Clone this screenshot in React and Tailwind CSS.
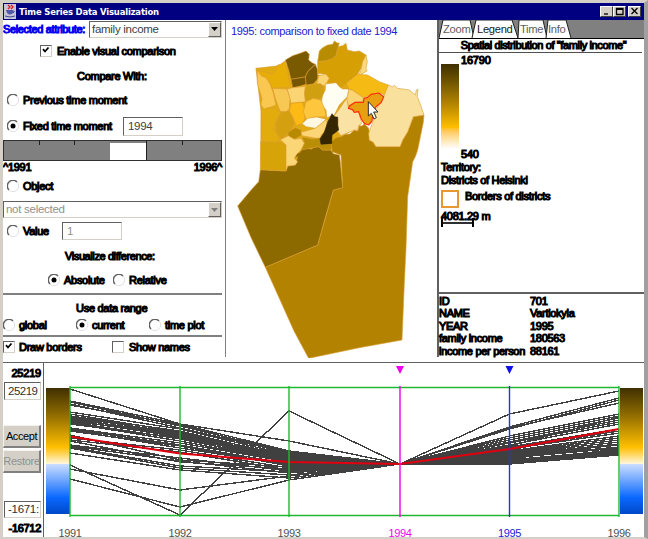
import React from 'react';
import clsx from 'clsx';

// District polygons, drawn back to front
const DISTRICTS = [
    { fill: '#e0aa10', d: '90,160 178,150 362,205 405,250 400,335 345,365 318,400 205,440 105,440 105,290' },
    { fill: '#b38300', d: '316,380 330,368 345,365 358,358 372,357 385,345 395,348 400,332 408,333 415,326 428,340 430,352 430,375 442,382 450,395 522,395 530,375 545,350 562,305 594,300 592,322 575,405 568,425 560,440 545,545 540,700 535,805 528,975 400,998 248,1030 205,950 118,757 275,690 322,525 350,518 345,420 318,410' },
    { fill: '#8c6a00', d: '103,464 180,468 185,453 208,450 215,425 205,430 212,415 222,412 230,400 240,398 255,403 265,396 278,395 290,405 315,405 322,416 340,420 343,440 350,518 322,525 300,600 275,690 118,757 76,670 35,573 78,522 98,500' },
    { fill: '#e8ae08', d: '90,160 100,168 115,171 138,178 150,165 155,150 163,148 178,137 183,160 188,190 195,215 140,220 132,207 120,188 105,182 94,178' },
    { fill: '#7a5a00', d: '178,135 200,122 222,115 240,108 250,118 248,135 258,143 268,148 245,170 238,186 195,193 188,165' },
    { fill: '#7a5a00', d: '268,148 275,165 275,192 262,207 240,210 238,186 245,170' },
    { fill: '#755600', d: '195,193 238,186 240,208 220,214 200,218' },
    { fill: '#d6a004', d: '275,140 300,137 330,122 335,95 350,92 360,85 364,105 385,110 400,108 420,120 410,140 405,160 395,178 380,190 362,205 345,218 338,212 330,205 304,203 310,190 300,178 275,175' },
    { fill: '#b88c00', d: '275,140 280,108 290,98 305,90 320,88 325,78 334,84 340,84 335,98 330,122 315,132 300,137' },
    { fill: '#fcd97c', d: '420,120 424,140 420,160 423,168 398,182 405,165 410,140' },
    { fill: '#f5bb14', d: '362,205 380,190 395,178 425,180 460,200 487,210 480,243 462,234 435,240 412,248 400,240 380,226 368,222' },
    { fill: '#f9e09c', d: '487,210 500,215 505,211 515,220 530,222 550,225 568,240 571,225 576,222 574,245 582,265 594,300 562,305 545,350 530,375 522,395 450,395 442,382 430,375 428,355 440,322 450,285 473,245' },
    { fill: '#fbd474', d: '368,222 380,226 400,240 412,248 410,260 385,262 367,272 362,255' },
    { fill: '#fffef2', d: '290,240 298,225 298,207 330,203 340,215 350,222 368,222 364,245 340,270 325,300 302,308 300,285 285,268' },
    { fill: '#fae1a4', d: '325,302 345,275 362,250 367,275 380,288 398,292 408,325 398,332 395,346 385,345 345,362 335,350 336,312' },
    { fill: '#fbd474', d: '272,207 278,182 298,177 310,190 302,203 295,212' },
    { fill: '#d0a010', d: '238,214 262,207 284,206 292,214 293,232 285,252 262,250 240,260 235,235' },
    { fill: '#fbd474', d: '183,222 200,218 238,214 235,235 238,260 195,265 190,245' },
    { fill: '#f8c854', d: '140,220 183,222 192,250 190,280 180,292 162,288 148,250' },
    { fill: '#fac850', d: '94,165 105,182 120,188 132,207 142,235 150,270 125,280 115,285 105,268 108,250 100,225 94,205' },
    { fill: '#e2ac0c', d: '106,285 125,278 150,280 165,292 150,315 143,342 160,368 155,382 105,382' },
    { fill: '#d4a010', d: '165,292 190,288 198,305 205,325 195,345 180,362 165,372 150,350 150,325' },
    { fill: '#fdb914', d: '195,265 228,262 240,290 232,325 210,332 200,305 190,288' },
    { fill: '#fdc63c', d: '240,260 262,250 285,255 297,285 300,305 270,306 240,312 232,290' },
    { fill: '#fff8e2', d: '228,326 245,310 272,306 300,312 292,322 268,340 240,335' },
    { fill: '#b88a00', d: '187,352 208,338 225,345 228,360 205,373 185,366' },
    { fill: '#fcd676', d: '225,352 268,340 303,312 302,340 285,362 283,372 228,362' },
    { fill: '#b98e06', d: '228,366 260,372 285,368 285,388 317,388 316,405 290,405 278,395 225,405 235,385' },
    { fill: '#332600', stroke: '#332600', d: '318,296 326,306 335,306 335,330 338,345 318,360 317,386 285,388 282,372 295,352 305,322' },
    { fill: '#d6a408', d: '104,380 165,382 180,390 180,468 103,464' },
    { fill: '#fbd676', d: '163,374 187,362 205,373 225,370 235,385 225,405 212,418 205,430 215,440 208,450 185,453 180,468 180,390' },
    { fill: '#e8a010', stroke: '#ff3010', width: 3.6, d: '367,280 372,272 388,262 412,262 414,250 425,247 435,238 458,234 473,245 466,262 450,275 440,300 438,318 428,330 415,325 406,312 398,290 385,292 380,284' },
];

const YEARS = [
    { x: 26, label: '1991', color: '#20b830', text: '#505050' },
    { x: 136, label: '1992', color: '#20b830', text: '#505050' },
    { x: 245, label: '1993', color: '#20b830', text: '#505050' },
    { x: 356, label: '1994', color: '#f000f0', text: '#f000f0' },
    { x: 465.5, label: '1995', color: '#3030d8', text: '#2020e0' },
    { x: 575, label: '1996', color: '#20b830', text: '#505050' },
];

// One row per district: vertical position at each year
const SERIES = [
    [26, 61, 78, 101, 51, 28],
    [102, 152, 48, 101, 64, 35],
    [106, 127, 113, 101, 66, 37],
    [116, 144, 117, 101, 65, 40],
    [38, 61, 88, 101, 73, 51],
    [39, 63, 89, 101, 75, 53],
    [41, 65, 90, 101, 77, 55],
    [42, 62, 91, 101, 79, 57],
    [49, 66, 92, 101, 80, 59],
    [51, 69, 93, 101, 82, 61],
    [53, 68, 94, 101, 83, 54],
    [54, 70, 95, 101, 84, 66],
    [55, 73, 96, 101, 85, 68],
    [56, 71, 94, 101, 86, 70],
    [57, 74, 97, 101, 87, 66],
    [58, 72, 96, 101, 88, 73],
    [59, 76, 98, 101, 89, 75],
    [60, 78, 99, 101, 90, 77],
    [61, 75, 100, 101, 91, 79],
    [65, 80, 99, 101, 92, 81],
    [66, 82, 101, 101, 93, 82],
    [67, 85, 102, 101, 94, 84],
    [68, 83, 103, 101, 95, 85],
    [72, 97, 104, 101, 96, 81],
    [75, 87, 105, 101, 97, 87],
    [77, 89, 107, 101, 98, 88],
    [78, 99, 106, 101, 99, 86],
    [82, 95, 108, 101, 99, 89],
    [83, 98, 110, 101, 100, 90],
    [84, 103, 109, 101, 100, 91],
    [85, 105, 112, 101, 101, 91],
    [90, 107, 115, 101, 101, 92],
];
const AVERAGE = [73.5, 90.5, 99, 101, 86, 66];

const points = row => row.map((y, i) => `${YEARS[i].x},${y}`).join(' ');

const Label = ({ children, className }) => (
    <span className={clsx('whitespace-pre [-webkit-text-stroke:1.1px_currentColor]', className)}>{children}</span>
);

const Radio = ({ checked }) => (
    <svg className="h-[12px] w-[12px] shrink-0" viewBox="0 0 12 12" fill="none">
        <path d="M2 10A5.2 5.2 0 0 1 10 2" stroke="#606060" strokeWidth="1.4" />
        <path d="M2 10A5.2 5.2 0 0 0 10 2" stroke="#e0e0e0" />
        {checked && <circle cx="6" cy="6" r="2.5" fill="#000" />}
    </svg>
);

const Check = ({ checked }) => (
    <span className="h-[12px] w-[12px] shrink-0 border border-[#d4d0c8] border-t-[#606060] border-l-[#606060]">
        {checked && (
            <svg className="h-[10px] w-[10px]" viewBox="0 0 10 10" fill="none" stroke="#000" strokeWidth="1.8">
                <path d="M2 3.2L4 5.5L7.5 1.5" />
            </svg>
        )}
    </span>
);

const Arrow = ({ disabled }) => (
    <span className="flex h-full w-[13px] items-center justify-center border border-white border-r-[#606060] border-b-[#606060] bg-[#d4d0c8]">
        <svg className="h-[4px] w-[7px]" viewBox="0 0 7 4">
            <path d="M0 0H7L3.5 4Z" fill={disabled ? '#808080' : '#000'} />
        </svg>
    </span>
);

const Field = ({ children, className }) => (
    <span className={clsx('flex items-center overflow-hidden border border-[#d4d0c8] border-t-[#606060] border-l-[#606060] bg-white text-[11.5px]', className)}>{children}</span>
);

const TitleBar = () => (
    <div className="flex h-[17px] shrink-0 items-center bg-[#000080] pr-[3px] pl-[1px]">
        <svg className="h-[15px] w-[12px]" viewBox="0 0 12 15" fill="none">
            <rect width="12" height="15" fill="#c8c4d8" />
            <path d="M4 1L6 3L4 5M7 1L9 3L7 5" stroke="#e02020" strokeWidth="1.3" />
            <path d="M2 6H9V9Q6 12 3 9Z" fill="#5058a8" />
            <path d="M9 7Q12 7 9 9M1 12Q6 14 11 12" stroke="#404890" />
        </svg>
        <span className="ml-[3px] text-[9.4px] font-bold tracking-[-0.17px] whitespace-pre text-white font-['DejaVu_Sans_Condensed','DejaVu_Sans',sans-serif]">Time Series Data Visualization</span>
        <div className="ml-auto flex">
            {['M2 7H6', 'M1.5 1.5H8V7.5H1.5ZM1.5 2.3H8', 'M1.5 1L7.5 7M7.5 1L1.5 7'].map((d, i) => (
                <span key={d} className={clsx('flex h-[11px] w-[13px] items-center justify-center border border-white border-r-[#404040] border-b-[#404040] bg-[#d4d0c8]', i === 2 && 'ml-[2px]')}>
                    <svg className="h-[9px] w-[9px]" viewBox="0 0 9 9" fill="none" stroke="#000" strokeWidth="1.3"><path d={d} /></svg>
                </span>
            ))}
        </div>
    </div>
);

const ControlPanel = () => (
    <div className="flex w-[223px] shrink-0 flex-col border-r border-[#808080] pr-[3px] tracking-[-0.28px]">
        <div className="flex h-[18px] items-center">
            <Label className="w-[86px] tracking-[-0.35px] text-[#0000f0]">Selected attribute:</Label>
            <Field className="h-[17px] flex-1 justify-between pl-[2px] text-[#404040]">family income<Arrow /></Field>
        </div>
        <div className="flex h-[26px] items-center pl-[37px]"><Check checked /><Label className="ml-[5px]">Enable visual comparison</Label></div>
        <div className="flex h-[24px] items-center pl-[74px]"><Label>Compare With:</Label></div>
        <div className="flex h-[24px] items-center pl-[4px]"><Radio /><Label className="ml-[4px]">Previous time moment</Label></div>
        <div className="flex h-[28px] items-center pl-[4px]">
            <Radio checked /><Label className="ml-[4px] w-[100px]">Fixed time moment</Label>
            <Field className="h-[19px] w-[60px] pl-[4px] text-[#404040]">1994</Field>
        </div>
        <div className="grid h-[21px] grid-cols-[34.6px_35.8px_35.8px_36px_36px_1fr] border border-[#303030] bg-[#808080]">
            {[0, 1, 2, 3, 4, 5].map(i => (
                <div key={i} className={clsx(i === 3 && 'mt-[2px] bg-white')}>
                    {i > 0 && i !== 3 && <div className={clsx('w-px bg-[#202020]', i === 4 ? 'h-full' : 'h-[4px]')} />}
                </div>
            ))}
        </div>
        <div className="flex h-[13px] items-center justify-between"><Label>^1991</Label><Label>1996^</Label></div>
        <div className="flex h-[26px] items-center pb-[2px] pl-[4px]"><Radio /><Label className="ml-[4px]">Object</Label></div>
        <div className="mt-[1px] flex h-[17px]">
            <Field className="flex-1 justify-between pl-[2px] text-[#909090]">not selected<Arrow disabled /></Field>
        </div>
        <div className="flex h-[26px] items-center pl-[4px]">
            <Radio /><Label className="ml-[4px] w-[39px]">Value</Label>
            <Field className="h-[18px] w-[60px] pl-[4px] text-[#909090]">1</Field>
        </div>
        <div className="flex h-[24px] items-center pl-[62px]"><Label className="tracking-[-0.4px]">Visualize difference:</Label></div>
        <div className="flex h-[24px] items-center pl-[45px]">
            <Radio checked /><Label className="ml-[4px] w-[49px]">Absolute</Label>
            <Radio /><Label className="ml-[4px]">Relative</Label>
        </div>
        <div className="mt-[1px] flex h-[44px] flex-col border-y-2 border-[#808080]">
            <Label className="mt-[6px] pl-[73px] leading-[14px]">Use data range</Label>
            <div className="mt-[2px] flex h-[16px] items-center">
                <Radio /><Label className="ml-[4px] w-[57px]">global</Label>
                <Radio checked /><Label className="ml-[4px] w-[57px]">current</Label>
                <Radio /><Label className="ml-[4px]">time plot</Label>
            </div>
        </div>
        <div className="flex h-[20px] items-center">
            <Check checked /><Label className="ml-[4px] w-[93px]">Draw borders</Label>
            <Check /><Label className="ml-[5px]">Show names</Label>
        </div>
    </div>
);

const MapPanel = () => (
    <div className="relative w-[211px] shrink-0">
        <svg className="h-[338px] w-[210px]" viewBox="0 15 630 1014">
            {DISTRICTS.map(({ fill, stroke = '#dc9c30', width = 1.8, d }) => (
                <polygon key={d} points={d} fill={fill} stroke={stroke} strokeWidth={width} strokeLinejoin="round" />
            ))}
            <path d="M427 260V303L436 295L444 312L451 308L443 291H456Z" fill="#fff" stroke="#303030" strokeWidth="3" />
        </svg>
        <span className="absolute top-[4px] left-[5px] text-[11px] leading-[14px] tracking-[-0.34px] whitespace-pre text-[#2020d0]">1995: comparison to fixed date 1994</span>
    </div>
);

const TABS = [
    { name: 'Zoom', x: 4, d: 'M0 18L4 0H31L35 18' },
    { name: 'Legend', x: 38, d: 'M33 18L37 0H73L79 18' },
    { name: 'Time', x: 81, d: 'M79 18L80 0H104L108 18' },
    { name: 'Info', x: 109, d: 'M107 18L109 0H127L132 18' },
];

const LegendPanel = () => (
    <div className="flex min-w-0 flex-1 flex-col border-l-2 border-[#606060] tracking-[-0.3px]">
        <div className="h-[19px] border-b border-black bg-[#808080]">
            <svg className="h-[18px] w-[205px]" viewBox="0 0 205 18">
                {TABS.map(tab => (
                    <g key={tab.name}>
                        <path d={tab.d} fill="#fff" stroke="#202020" />
                        <text x={tab.x} y="13" fontSize="11.2" fill={tab.name === 'Legend' ? '#202020' : '#606060'}>{tab.name}</text>
                    </g>
                ))}
            </svg>
        </div>
        <div className="mr-[2px] flex h-[14px] items-center justify-center border-b border-[#505050] pb-[1px] pl-[6px]">
            <Label className="tracking-[-0.38px]">Spatial distribution of "family income"</Label>
        </div>
        <div className="mt-[1px] flex h-[107px] pl-[2px]">
            <div className="mt-[10px] h-[85px] w-[18px] bg-linear-to-b from-[#403000] via-[#ffbf00] via-75% to-white" />
            <div className="ml-[2px] flex flex-col justify-between leading-[13px] tracking-[-0.2px]"><Label>16790</Label><Label>540</Label></div>
        </div>
        <div className="flex flex-col pl-[2px] leading-[12.5px]"><Label>Territory:</Label><Label>Districts of Helsinki</Label></div>
        <div className="mt-[4px] flex h-[18px] items-center pl-[2px]">
            <span className="h-[18px] w-[18px] border-2 border-[#e89830]" /><Label className="ml-[6px] pb-[5px]">Borders of districts</Label>
        </div>
        <div className="mt-[2px] pl-[2px] leading-[13px]">
            <Label>4081.29 m</Label>
            <div className="-mt-[5px] flex h-[9px] w-[33px] items-center border-x-2 border-black"><div className="h-[2px] w-full bg-[#303030]" /></div>
        </div>
        <div className="mt-auto grid h-[65px] grid-cols-[91px_1fr] content-start border-t-2 border-[#606060] pt-[0.5px] leading-[12.5px]">
            {[['ID', '701'], ['NAME', 'Vartiokyla'], ['YEAR', '1995'], ['family income', '180563'], ['income per person', '88161']].map(([key, value]) => (
                <React.Fragment key={key}><Label>{key}</Label><Label>{value}</Label></React.Fragment>
            ))}
        </div>
    </div>
);

const TimePlot = () => (
    <div className="flex flex-1 border-t border-[#606060]">
        <div className="flex w-[41px] shrink-0 flex-col items-end border-r border-[#606060] pr-[2px]">
            <Label className="mt-[4px] leading-[13px] tracking-[-0.2px]">25219</Label>
            <Field className="mt-[2px] h-[18px] w-[37px] pl-[3px] tracking-[-0.5px] text-[#303030]">25219</Field>
            <button className="mt-[25px] h-[23px] w-[38px] border border-[#f4f2ec] border-r-2 border-b-2 border-r-[#808080] border-b-[#808080] bg-[#d4d0c8] text-[11px] tracking-[-0.4px]">Accept</button>
            <button className="mt-[2px] h-[23px] w-[38px] border border-[#f4f2ec] border-r-2 border-b-2 border-r-[#808080] border-b-[#808080] bg-[#d4d0c8] text-[11px] tracking-[-0.3px] text-[#909090]"><span className="-mx-1">Restore</span></button>
            <Field className="mt-[28px] h-[17px] w-[37px] pl-[3px] tracking-[-0.3px] text-[#303030]">-1671:</Field>
            <Label className="mt-[4px] leading-[13px] tracking-[-0.3px]">-16712</Label>
        </div>
        <svg className="h-[174px] w-[600px] shrink-0" viewBox="0 0 600 174">
            <defs>
                <linearGradient id="ramp" x1="0" y1="0" x2="0" y2="1">
                    <stop offset="0" stopColor="#403000" />
                    <stop offset="0.2" stopColor="#8a6800" />
                    <stop offset="0.47" stopColor="#ffbf00" />
                    <stop offset="0.6" stopColor="#fff6dc" />
                    <stop offset="0.6" stopColor="#cfe0ff" />
                    <stop offset="0.87" stopColor="#0a68ff" />
                    <stop offset="1" stopColor="#0048c8" />
                </linearGradient>
            </defs>
            <rect x="2" y="25" width="24" height="126" fill="url(#ramp)" />
            <rect x="576" y="25" width="23" height="126" fill="url(#ramp)" />
            {SERIES.map(row => (
                <polyline key={row.join()} points={points(row)} fill="none" stroke="#404040" strokeWidth="1.4" shapeRendering="crispEdges" />
            ))}
            <polyline points={points(AVERAGE)} fill="none" stroke="#e00010" strokeWidth="1.9" />
            <path d="M26 24.5H575M26 152.5H575" stroke="#20b830" strokeWidth="1.4" />
            {YEARS.map(year => (
                <g key={year.label}>
                    <path d={`M${year.x} 23V154`} stroke={year.color} strokeWidth="1.4" />
                    <text x={year.x} y="173.5" textAnchor="middle" fontSize="11" letterSpacing="-0.4" fill={year.text}>{year.label}</text>
                </g>
            ))}
            <path d="M352 3H360L356 11Z" fill="#f000f0" />
            <path d="M461.5 3H469.5L465.5 11Z" fill="#1010e8" />
        </svg>
    </div>
);

export default function App() {
    return (
        <div className="flex h-[539px] w-[648px] flex-col overflow-hidden border-t-3 border-r-4 border-b-2 border-l-3 border-[#d4d0c8] border-r-[#a0a0a0] bg-white text-[11px] leading-[13px] text-black font-['Liberation_Sans',Arial,sans-serif]">
            <TitleBar />
            <div className="flex h-[337px] shrink-0">
                <ControlPanel />
                <MapPanel />
                <LegendPanel />
            </div>
            <div className="h-[5px] shrink-0" />
            <TimePlot />
        </div>
    );
}
